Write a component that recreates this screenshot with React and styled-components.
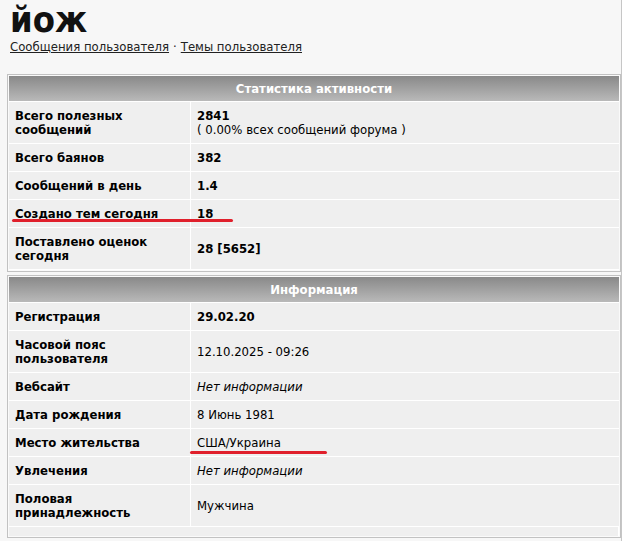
import React from 'react';
import styled, { createGlobalStyle } from 'styled-components';

const statsRows = [
  { label: 'Всего полезных сообщений', value: '2841', note: '( 0.00% всех сообщений форума )', bold: true },
  { label: 'Всего баянов', value: '382', bold: true },
  { label: 'Сообщений в день', value: '1.4', bold: true },
  { label: 'Создано тем сегодня', value: '18', bold: true, mark: 'wide' },
  { label: 'Поставлено оценок сегодня', value: '28 [5652]', bold: true },
];

const infoRows = [
  { label: 'Регистрация', value: '29.02.20', bold: true },
  { label: 'Часовой пояс пользователя', value: '12.10.2025 - 09:26' },
  { label: 'Вебсайт', value: 'Нет информации', italic: true },
  { label: 'Дата рождения', value: '8 Июнь 1981' },
  { label: 'Место жительства', value: 'США/Украина', mark: 'value' },
  { label: 'Увлечения', value: 'Нет информации', italic: true },
  { label: 'Половая принадлежность', value: 'Мужчина' },
];

const StatRow = ({ row }) => (
  <Row>
    <LabelCell>
      <LabelText>{row.label}</LabelText>
    </LabelCell>
    <ValueCell>
      <Value $bold={row.bold} $italic={row.italic}>{row.value}</Value>
      {row.note && <Note>{row.note}</Note>}
    </ValueCell>
    {row.mark && <Underline $kind={row.mark} />}
  </Row>
);

const Panel = ({ title, rows, footer }) => (
  <PanelBox>
    <PanelHead>{title}</PanelHead>
    {rows.map((r) => (
      <StatRow key={r.label} row={r} />
    ))}
    {footer && <PanelFoot />}
  </PanelBox>
);

const App = () => {
  return (
    <>
      <GlobalStyle />
      <Page>
        <Nick>йож</Nick>
        <Links>
          <a href="#posts">Сообщения пользователя</a>
          <Dot>·</Dot>
          <a href="#topics">Темы пользователя</a>
        </Links>
        <Panel title="Статистика активности" rows={statsRows} />
        <Panel title="Информация" rows={infoRows} footer />
        <NextPanel />
      </Page>
    </>
  );
};

export default App;

// Styled Components

const GlobalStyle = createGlobalStyle`
  html, body {
    margin: 0;
    padding: 0;
    background: #f7f7f7;
  }
  body {
    font-family: "DejaVu Sans Condensed", "DejaVu Sans", Tahoma, sans-serif;
    color: #000;
  }
`;

const Page = styled.div`
  width: 614px;
  height: 541px;
  overflow: hidden;
  padding: 0 0 0 7px;
  border-right: 1px solid #c6c6c6;
`;

const Nick = styled.h1`
  margin: 0;
  padding: 1px 0 0 3px;
  font-size: 36px;
  line-height: 38px;
  font-weight: bold;
  color: #111;
`;

const Links = styled.div`
  padding-left: 3px;
  font-size: 13px;
  line-height: 16px;
  margin-bottom: 19px;

  a {
    color: #222;
    text-decoration: underline;
  }
`;

const Dot = styled.span`
  margin: 0 4px;
  color: #222;
`;

const PanelBox = styled.div`
  width: 610px;
  border: 1px solid #c2c2c2;
  padding: 1px;
  background: #fafafa;
  margin-bottom: 3px;
`;

const PanelHead = styled.div`
  height: 25px;
  line-height: 25px;
  text-align: center;
  font-size: 13px;
  font-weight: bold;
  color: #fff;
  background: linear-gradient(#898989, #b9b9b9);
  border-bottom: 1px solid #fff;
`;

const Row = styled.div`
  position: relative;
  display: grid;
  grid-template-columns: 181px 1fr;
  column-gap: 1px;
  background: #fff;
  border-bottom: 1px solid #fff;
`;

const Cell = styled.div`
  background: #efefef;
  padding: 7px 6px 6px;
  font-size: 13px;
  line-height: 14px;
  display: flex;
  flex-direction: column;
  justify-content: center;
`;

const LabelCell = styled(Cell)`
  font-weight: bold;
`;

const ValueCell = styled(Cell)``;

const LabelText = styled.div`
  max-width: 150px;
`;

const Value = styled.div`
  font-weight: ${(p) => (p.$bold ? 'bold' : 'normal')};
  font-style: ${(p) => (p.$italic ? 'italic' : 'normal')};
`;

const Note = styled.div`
  font-size: 13px;
`;

// red marker strokes drawn over the rows
const Underline = styled.div`
  position: absolute;
  height: 3px;
  border-radius: 2px;
  background: #e0202c;
  bottom: ${(p) => (p.$kind === 'wide' ? '5px' : '2px')};
  left: ${(p) => (p.$kind === 'wide' ? '3px' : '181px')};
  width: ${(p) => (p.$kind === 'wide' ? '221px' : '137px')};
`;

const PanelFoot = styled.div`
  height: 9px;
  background: #efefef;
  border-right: 1px solid #fff;
`;

const NextPanel = styled.div`
  width: 610px;
  height: 10px;
  border: 1px solid #c2c2c2;
`;
